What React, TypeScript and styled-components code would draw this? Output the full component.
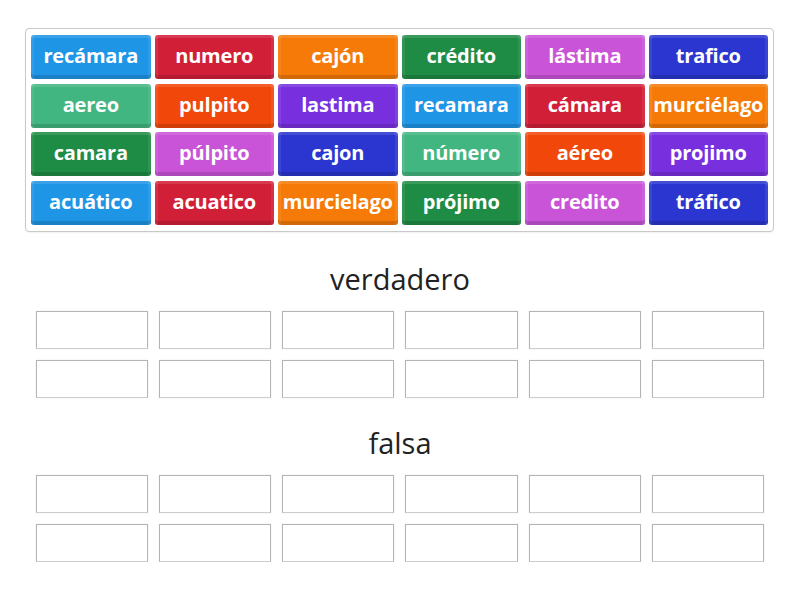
import styled, { createGlobalStyle } from "styled-components";

const GlobalStyle = createGlobalStyle`
  html, body {
    margin: 0;
    padding: 0;
    background: #fff;
    font-family: "Open Sans", "Liberation Sans", sans-serif;
  }
`;

const palette: Record<string, string> = {
  blue: "#1f95e6",
  red: "#d21f38",
  orange: "#f57a08",
  green: "#1f8c45",
  orchid: "#c954d8",
  indigo: "#2a36cf",
  teal: "#42b680",
  flame: "#f1470b",
  purple: "#7830df",
};

const cycle = ["blue", "red", "orange", "green", "orchid", "indigo", "teal", "flame", "purple"];

const words = [
  "recámara", "numero", "cajón", "crédito", "lástima", "trafico",
  "aereo", "pulpito", "lastima", "recamara", "cámara", "murciélago",
  "camara", "púlpito", "cajon", "número", "aéreo", "projimo",
  "acuático", "acuatico", "murcielago", "prójimo", "credito", "tráfico",
];

const Page = styled.div`
  padding: 28px 26px 0 25px;
  width: 800px;
  box-sizing: border-box;
`;

const Board = styled.div`
  border: 1px solid #c9c9c9;
  border-radius: 4px;
  padding: 6px 5px 6px 5px;
  display: grid;
  grid-template-columns: repeat(6, 1fr);
  column-gap: 4px;
  row-gap: 4.5px;
  box-shadow: 0 1px 2px rgba(0, 0, 0, 0.06);
`;

const Tile = styled.div<{ $bg: string }>`
  height: 44px;
  border-radius: 3px;
  background: ${({ $bg }) => $bg};
  box-shadow:
    inset 0 -4px 0 rgba(0, 0, 0, 0.14),
    inset 0 3px 0 rgba(255, 255, 255, 0.12),
    inset 3px 0 0 rgba(255, 255, 255, 0.08),
    inset -3px 0 0 rgba(255, 255, 255, 0.08);
  color: #fff;
  font-weight: 700;
  font-size: 20px;
  display: flex;
  align-items: center;
  justify-content: center;
  padding-bottom: 3px;
  box-sizing: border-box;
  white-space: nowrap;
  overflow: hidden;
  letter-spacing: -0.2px;
`;

const Section = styled.div<{ $top: number }>`
  padding: ${({ $top }) => $top}px 10px 0 11px;
`;

const Heading = styled.div`
  text-align: center;
  font-size: 29px;
  line-height: 36px;
  color: #222;
  margin-bottom: 14px;
`;

const Slots = styled.div`
  display: grid;
  grid-template-columns: repeat(6, 1fr);
  column-gap: 11px;
  row-gap: 11px;
`;

const Slot = styled.div`
  height: 38px;
  box-sizing: border-box;
  border: 1px solid #b4b4b4;
  border-bottom-color: #cdcdcd;
  box-shadow: 0 0 2px rgba(0, 0, 0, 0.08);
`;

const DropArea = ({ title, top }: { title: string; top: number }) => (
  <Section $top={top}>
    <Heading>{title}</Heading>
    <Slots>
      {Array.from({ length: 12 }).map((_, i) => (
        <Slot key={i} />
      ))}
    </Slots>
  </Section>
);

export default function App() {
  return (
    <>
      <GlobalStyle />
      <Page>
        <Board>
          {words.map((w, i) => (
            <Tile key={i} $bg={palette[cycle[i % cycle.length]]}>
              {w}
            </Tile>
          ))}
        </Board>
        <DropArea title="verdadero" top={29} />
        <DropArea title="falsa" top={27} />
      </Page>
    </>
  );
}
